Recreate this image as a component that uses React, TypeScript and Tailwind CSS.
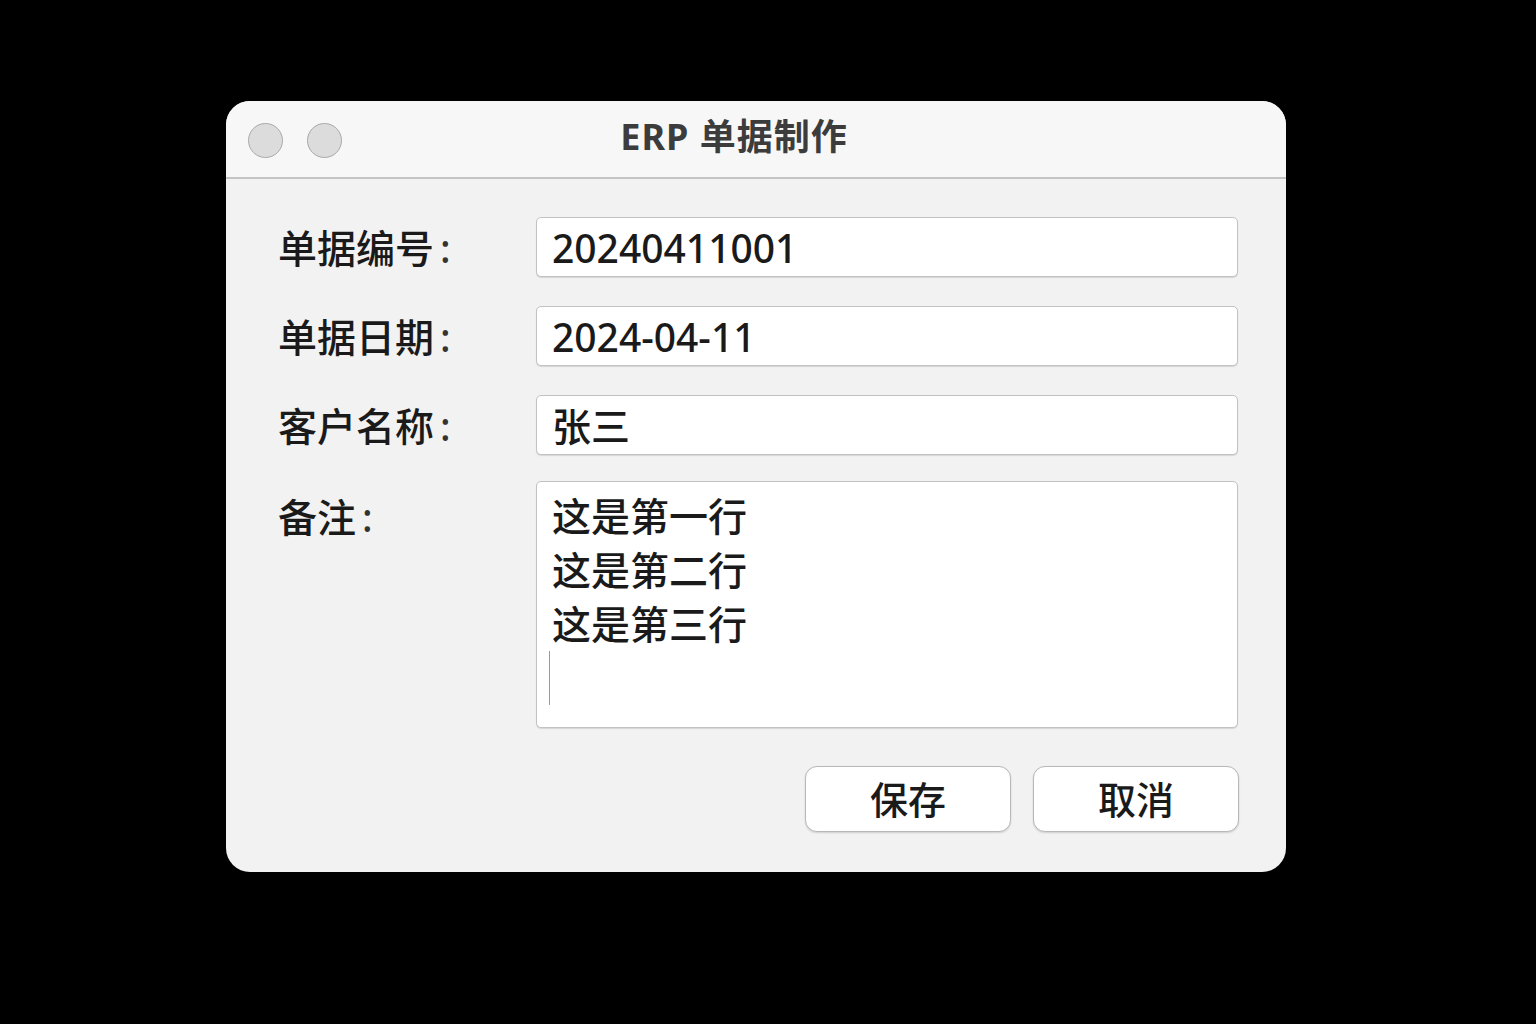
export default function App() {
  return (
    <div
      className="w-[1536px] h-[1024px] bg-black flex items-start justify-start pt-[101px] pl-[226px]"
      style={{ fontFamily: '"Noto Sans", "Noto Sans CJK SC", sans-serif' }}
    >
      <div className="w-[1060px] h-[771px] bg-[#f2f2f2] rounded-[24px] overflow-hidden flex flex-col">
        {/* title bar */}
        <div className="relative h-[78px] shrink-0 bg-[#f7f7f7] border-b-2 border-[#c4c4c4] flex items-center justify-center">
          <div className="absolute left-[22px] top-[22px] flex gap-[24px]">
            <span className="block w-[35px] h-[35px] rounded-full bg-[#dcdcdc] border border-[#a9a9a9]" />
            <span className="block w-[35px] h-[35px] rounded-full bg-[#dcdcdc] border border-[#a9a9a9]" />
          </div>
          <h1 className="text-[36px] font-bold text-[#3c3c3c] tracking-[1px] mt-[-4px] mr-[44px]">ERP 单据制作</h1>
        </div>

        {/* form */}
        <div className="flex flex-col pl-[52px] pr-[48px] pt-[38px] pb-[40px] text-[#1a1a1a] font-medium">
          <div className="flex flex-col gap-[29px]">
            <Row label="单据编号" value="20240411001" />
            <Row label="单据日期" value="2024-04-11" />
            <Row label="客户名称" value="张三" />
          </div>

          <div className="flex items-start mt-[26px]">
            <label className="w-[258px] shrink-0 text-[39px] leading-none pt-[16px]">
              备注<span className="ml-[6px] text-[#333]">:</span>
            </label>
            <div className="flex-1 h-[247px] bg-white border border-[#c2c2c2] rounded-[5px] shadow-[0_1px_1px_rgba(0,0,0,0.12)] pl-[15px] pt-[7px]">
              <div className="text-[39px] leading-[54px]">
                <div>这是第一行</div>
                <div>这是第二行</div>
                <div>这是第三行</div>
                <div className="w-[1px] h-[54px] bg-[#9a9a9a] -ml-[3px]" />
              </div>
            </div>
          </div>

          <div className="flex justify-end gap-[22px] mt-[38px] mr-[-1px]">
            <button className="w-[206px] h-[66px] bg-white border border-[#b8b8b8] rounded-[12px] shadow-[0_1px_2px_rgba(0,0,0,0.15)] text-[38px] text-[#1a1a1a] leading-none">
              保存
            </button>
            <button className="w-[206px] h-[66px] bg-white border border-[#b8b8b8] rounded-[12px] shadow-[0_1px_2px_rgba(0,0,0,0.15)] text-[38px] text-[#1a1a1a] leading-none">
              取消
            </button>
          </div>
        </div>
      </div>
    </div>
  );
}

function Row({ label, value }: { label: string; value: string }) {
  return (
    <div className="flex items-center">
      <label className="w-[258px] shrink-0 text-[39px] leading-none">
        {label}
        <span className="ml-[6px] text-[#333]">:</span>
      </label>
      <div className="flex-1 h-[60px] bg-white border border-[#c2c2c2] rounded-[5px] shadow-[0_1px_1px_rgba(0,0,0,0.12)] flex items-center pl-[15px]">
        <span className="text-[39px] leading-none">{value}</span>
      </div>
    </div>
  );
}
